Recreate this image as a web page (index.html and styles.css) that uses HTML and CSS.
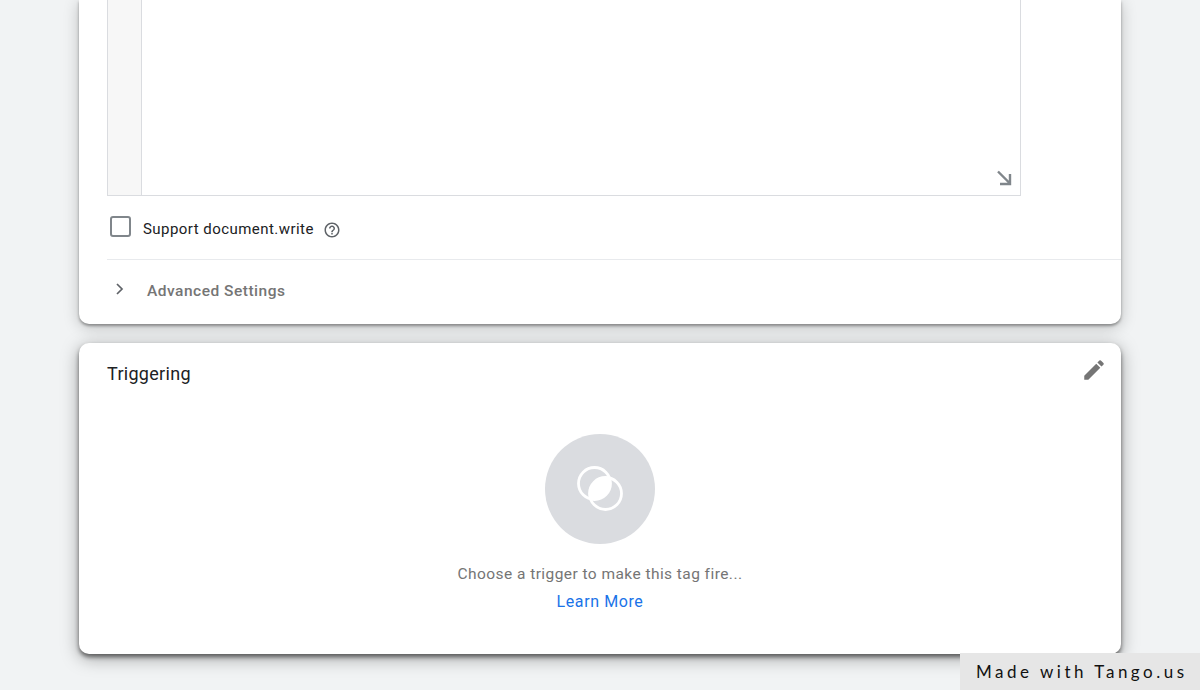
FILE: index.html
```html
<!DOCTYPE html>
<html>
<head>
<meta name="viewport" content="width=device-width, initial-scale=1.0">
<link rel="stylesheet" href="styles.css">
</head>
<body>
<div class="page">
	<div class="card card-config">
		<div class="editor">
			<div class="gutter"></div>
			<div class="code"></div>
			<svg class="resize" width="16" height="16" viewBox="0 0 16 16"><path d="M2 1.5 L13.5 13 M14 4 V14 H4" fill="none" stroke="#80868b" stroke-width="2.4"/></svg>
		</div>
		<div class="check-row">
			<span class="checkbox"></span>
			<span class="check-label">Support document.write</span>
			<svg class="help" width="18" height="18" viewBox="0 0 24 24"><path fill="#5f6368" d="M11 18h2v-2h-2v2zm1-16C6.48 2 2 6.48 2 12s4.48 10 10 10 10-4.48 10-10S17.52 2 12 2zm0 18c-4.41 0-8-3.59-8-8s3.59-8 8-8 8 3.59 8 8-3.59 8-8 8zm0-14c-2.21 0-4 1.79-4 4h2c0-1.1.9-2 2-2s2 .9 2 2c0 2-3 1.75-3 5h2c0-2.25 3-2.5 3-5 0-2.21-1.79-4-4-4z"/></svg>
		</div>
		<div class="advanced">
			<svg class="chevron" width="8" height="12" viewBox="0 0 8 12"><path d="M1 1 L6 6 L1 11" fill="none" stroke="#5f6368" stroke-width="1.7"/></svg>
			<span class="advanced-label">Advanced Settings</span>
		</div>
	</div>

	<div class="card card-trigger">
		<div class="card-head">
			<h2 class="card-title">Triggering</h2>
			<svg class="edit" width="26" height="26" viewBox="0 0 24 24"><path fill="#757575" d="M3 17.25V21h3.75L17.81 9.94l-3.75-3.75L3 17.25zM20.71 7.04a1 1 0 0 0 0-1.41l-2.34-2.34a1 1 0 0 0-1.41 0l-1.83 1.83 3.75 3.75 1.83-1.83z"/></svg>
		</div>
		<div class="empty">
			<div class="empty-icon">
				<svg width="46" height="46" viewBox="0 0 46 46">
					<clipPath id="lens"><circle cx="17.5" cy="17.5" r="16"/></clipPath>
					<circle cx="28.5" cy="27.5" r="16" fill="#fff" clip-path="url(#lens)"/>
					<circle cx="17.5" cy="17.5" r="16" fill="none" stroke="#fff" stroke-width="2.8"/>
					<circle cx="28.5" cy="27.5" r="16" fill="none" stroke="#fff" stroke-width="2.8"/>
				</svg>
			</div>
			<div class="empty-text">Choose a trigger to make this tag fire...</div>
			<a class="learn" href="#">Learn More</a>
		</div>
	</div>
</div>
<div class="tango">Made with Tango.us</div>
</body>
</html>
```

FILE: styles.css
```css
* {
	box-sizing: border-box;
}
html, body {
	margin: 0;
	height: 100%;
	overflow: hidden;
}
body {
	background: #f1f3f4;
	font-family: Roboto, "Liberation Sans", sans-serif;
}
.page {
	width: 1042px;
	margin-left: 79px;
}
.card {
	background: #fff;
	border-radius: 10px;
}
.card-config {
	height: 324px;
	padding-left: 28px;
	border-radius: 0 0 10px 10px;
	box-shadow: 0 2px 3px rgba(0, 0, 0, .35), 0 3px 16px rgba(0, 0, 0, .22);
}
.editor {
	position: relative;
	display: flex;
	width: 914px;
	height: 196px;
	border: 1px solid #dadce0;
	border-top: 0;
}
.gutter {
	width: 34px;
	background: #f7f7f7;
	border-right: 1px solid #dadce0;
}
.code {
	flex: 1;
}
.resize {
	position: absolute;
	right: 8px;
	bottom: 9px;
}
.check-row {
	display: flex;
	align-items: center;
	height: 64px;
	padding-left: 3px;
	border-bottom: 1px solid #e8eaed;
}
.checkbox {
	width: 21px;
	height: 21px;
	margin-top: -2px;
	border: 2px solid #80868b;
	border-radius: 3px;
}
.check-label {
	margin-left: 12px;
	margin-top: 2px;
	font-size: 15px;
	letter-spacing: .45px;
	color: #202124;
}
.help {
	margin-left: 9px;
	margin-top: 4px;
}
.advanced {
	display: flex;
	align-items: center;
	height: 60px;
	padding-left: 9px;
}
.advanced-label {
	margin-left: 23px;
	margin-top: 2px;
	font-size: 15.5px;
	font-weight: 500;
	letter-spacing: .5px;
	color: #757575;
}
.chevron {
	margin-top: -2px;
}
.card-trigger {
	height: 311px;
	margin-top: 19px;
	box-shadow: 0 3px 4px rgba(0, 0, 0, .5), 0 4px 18px rgba(0, 0, 0, .35);
}
.card-head {
	display: flex;
	justify-content: space-between;
	height: 39px;
	padding: 14px 14px 0 28px;
}
.card-title {
	margin: 6px 0 0;
	font-size: 18px;
	font-weight: 400;
	letter-spacing: .3px;
	color: #202124;
}
.empty {
	display: flex;
	flex-direction: column;
	align-items: center;
	margin-top: 52px;
}
.empty-icon {
	display: flex;
	align-items: center;
	justify-content: center;
	width: 110px;
	height: 110px;
	border-radius: 50%;
	background: #dadce0;
}
.empty-text {
	margin-top: 21px;
	font-size: 15.5px;
	letter-spacing: .44px;
	color: #757575;
}
.learn {
	margin-top: 9px;
	font-size: 16px;
	letter-spacing: .6px;
	color: #1a73e8;
	text-decoration: none;
}
.tango {
	position: absolute;
	right: 0;
	bottom: 0;
	width: 240px;
	height: 37px;
	padding-left: 16px;
	background: #e6e6e6;
	font-family: Lato, sans-serif;
	font-size: 17px;
	line-height: 37px;
	letter-spacing: 3.5px;
	color: #111;
}
```
